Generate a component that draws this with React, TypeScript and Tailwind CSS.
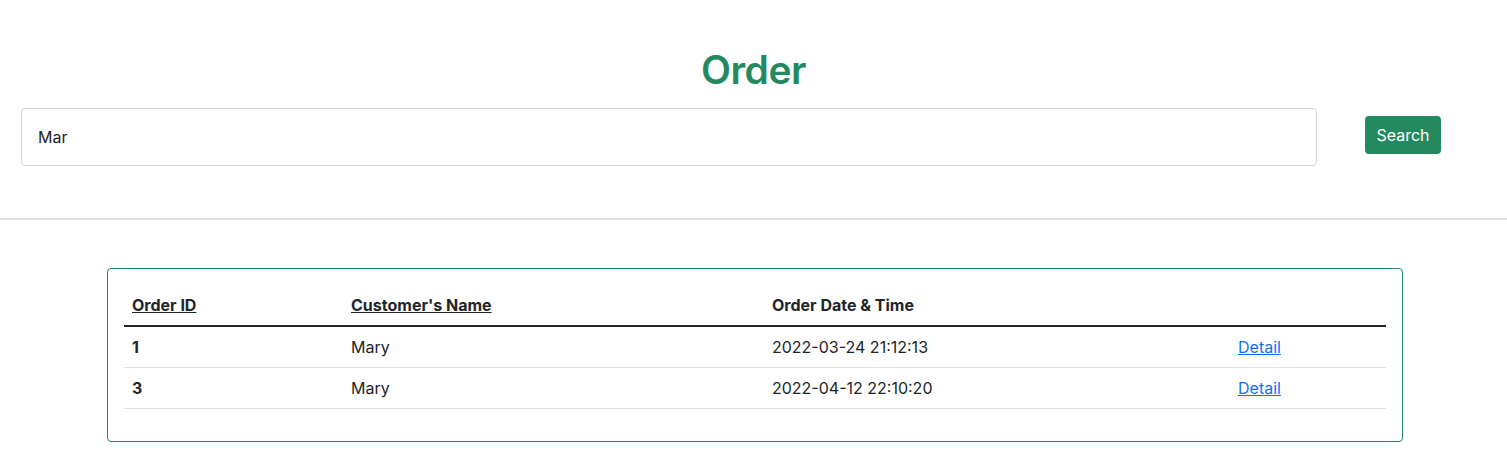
import { FC } from 'react'

const orders = [
  { id: 1, name: 'Mary', date: '2022-03-24 21:12:13' },
  { id: 3, name: 'Mary', date: '2022-04-12 22:10:20' },
]

const App: FC = () => {
  return (
    <div className="min-h-screen bg-white text-[#212529] font-['Inter','Liberation_Sans',sans-serif] text-base">
      <div className="pt-[46px]">
        <h1 className="text-center text-[39px] leading-[48px] font-semibold tracking-[-0.5px] text-[#24895e]">Order</h1>
        <div className="flex items-start mt-[14px] pl-[21px]">
          <input
            className="w-[1296px] h-[58px] border border-[#ced4da] rounded-[4px] px-4 text-base outline-none"
            defaultValue="Mar"
          />
          <button className="ml-[48px] mt-[8px] w-[76px] h-[38px] bg-[#24895e] text-white rounded-[4px] text-base">
            Search
          </button>
        </div>
      </div>
      <hr className="mt-[52px] border-0 h-[2px] bg-[#dee2e6]" />
      <div className="pl-[107px] pr-[104px] pt-[48px]">
        <div className="border border-[#24895e] rounded-[4px] p-4 pb-8">
          <table className="w-full border-collapse text-left">
            <thead>
              <tr className="border-b-2 border-[#212529]">
                <th className="w-[219px] px-2 py-2 font-bold underline">Order ID</th>
                <th className="w-[421px] px-2 py-2 font-bold underline">Customer's Name</th>
                <th className="w-[466px] px-2 py-2 font-bold">Order Date &amp; Time</th>
                <th className="px-2 py-2"></th>
              </tr>
            </thead>
            <tbody>
              {orders.map((o) => (
                <tr key={o.id} className="border-b border-[#dee2e6]">
                  <td className="px-2 py-2 font-bold">{o.id}</td>
                  <td className="px-2 py-2">{o.name}</td>
                  <td className="px-2 py-2">{o.date}</td>
                  <td className="px-2 py-2">
                    <a href="#" className="text-[#0d6efd] underline">Detail</a>
                  </td>
                </tr>
              ))}
            </tbody>
          </table>
        </div>
      </div>
    </div>
  )
}

export default App
